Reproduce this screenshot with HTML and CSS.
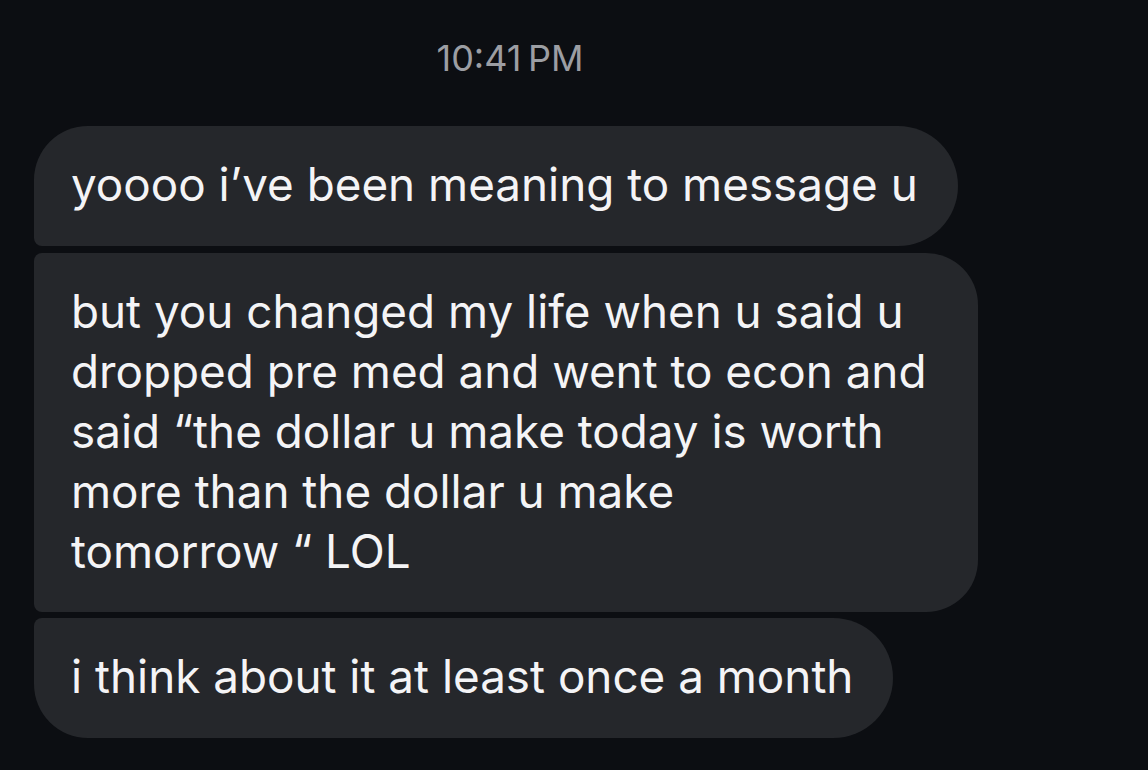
FILE: index.html
```html
<!DOCTYPE html>
<html lang="en">
<head>
  <meta charset="UTF-8">
  <title>Messages</title>
  <link rel="stylesheet" href="styles.css">
</head>
<body>
  <div class="thread">
    <div class="timestamp">10:41&#8201;PM</div>

    <div class="bubble first">yoooo i’ve been meaning to message u</div>
    <div class="bubble middle">but you changed my life when u said u dropped pre med and went to econ and said “the dollar u make today is worth more than the dollar u make<br>tomorrow “ LOL</div>
    <div class="bubble last">i think about it at least once a month</div>
  </div>
</body>
</html>
```

FILE: styles.css
```css
html, body {
  margin: 0;
  background: #0c0e12;
}
body {
  font-family: Inter, "Noto Sans", sans-serif;
  color: #f4f4f6;
  height: 770px;
  overflow: hidden;
}
.thread {
  width: 952px;
  padding: 36px 0 0 34px;
  display: flex;
  flex-direction: column;
  align-items: flex-start;
}
.timestamp {
  align-self: stretch;
  text-align: center;
  font-size: 36px;
  line-height: 44px;
  color: #9c9ea3;
  margin-bottom: 46px;
}
.bubble {
  box-sizing: border-box;
  max-width: 944px;
  background: #25272b;
  font-size: 45.8px;
  line-height: 60px;
  padding: 29px 40px 31px 37px;
  margin-bottom: 6px;
  border-radius: 8px 60px 60px 8px;
}
.bubble.first {
  margin-bottom: 7px;
  border-top-left-radius: 54px;
}
.bubble.middle {
  padding-bottom: 30px;
  border-top-right-radius: 52px;
  border-bottom-right-radius: 52px;
}
.bubble.last {
  border-bottom-left-radius: 54px;
}
```
